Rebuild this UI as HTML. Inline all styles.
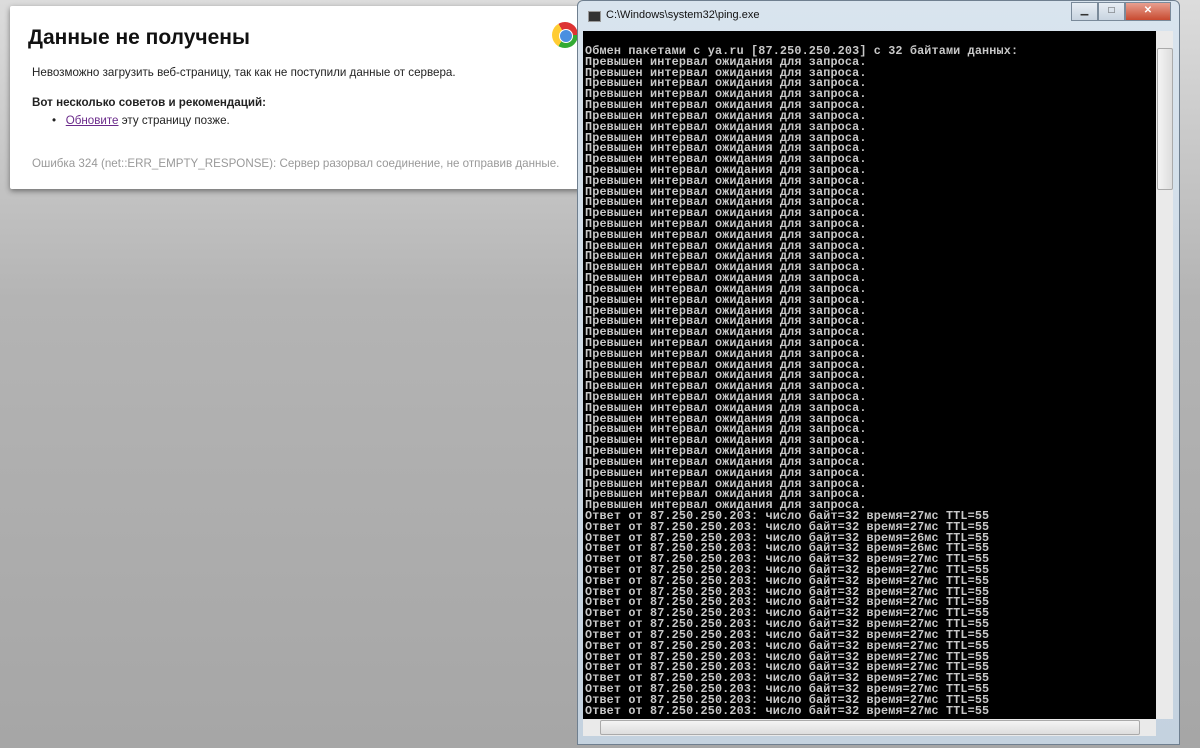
<!DOCTYPE html>
<html><head><meta charset="utf-8"><style>
body{margin:0;width:1200px;height:748px;overflow:hidden;background:linear-gradient(#dcdcdc,#b4b4b4 40%,#a6a6a6);font-family:"Liberation Sans",sans-serif;position:relative}
.card{position:absolute;left:10px;top:6px;width:580px;height:183px;background:#fff;box-shadow:0 2px 6px rgba(0,0,0,.45);border-radius:2px}
.card h1{position:absolute;left:18px;top:20px;margin:0;font-size:21px;font-weight:bold;color:#111}
.p{position:absolute;left:22px;font-size:11.6px;color:#222}
.chrome{position:absolute;left:542px;top:16px;width:26px;height:26px;border-radius:50%;background:conic-gradient(from -30deg,#d33 0 120deg,#3a3 120deg 240deg,#fc3 240deg 360deg)}
.chrome:after{content:"";position:absolute;left:7px;top:7px;width:12px;height:12px;border-radius:50%;background:#4a8fe0;border:1px solid #fff}
.win{position:absolute;left:577px;top:0;width:603px;height:745px;background:linear-gradient(#d9e4ee,#c4d2df);border:1px solid #6f7f8f;border-radius:6px 6px 0 0;box-sizing:border-box}
.title{position:absolute;left:28px;top:8px;font-size:11px;color:#111}
.ticon{position:absolute;left:10px;top:10px;width:11px;height:9px;background:#333;border:1px solid #999}
.btns{position:absolute;right:8px;top:1px;height:18px;display:flex}
.btns div{width:25px;height:17px;border:1px solid #7a8a9a;background:linear-gradient(#e8eef4,#c8d4e0);font-size:10px;text-align:center;line-height:16px;color:#333}
.btns .x{width:44px;background:linear-gradient(#e8a090,#c84a30);color:#fff;font-weight:bold}
.con{position:absolute;left:5px;top:30px;width:573px;height:688px;background:#000;overflow:hidden}
.con pre{margin:0;padding:15px 0 0 2px;font-family:"Liberation Mono","DejaVu Sans Mono",monospace;font-weight:bold;font-size:11.8px;line-height:10.82px;color:#c8c8c8;letter-spacing:0.14px}
.vs{position:absolute;left:578px;top:30px;width:17px;height:688px;background:#eaeaea}
.vs .th{position:absolute;left:1px;top:17px;width:14px;height:140px;background:linear-gradient(90deg,#f4f4f4,#ddd);border:1px solid #aaa;border-radius:2px}
.hs{position:absolute;left:5px;top:718px;width:573px;height:17px;background:#eaeaea}
.hs .th{position:absolute;left:17px;top:1px;width:538px;height:13px;background:linear-gradient(#f4f4f4,#ddd);border:1px solid #aaa;border-radius:2px}
</style></head><body>
<div class="card">
<h1>Данные не получены</h1>
<div class="chrome"></div>
<div class="p" style="top:60px">Невозможно загрузить веб-страницу, так как не поступили данные от сервера.</div>
<div class="p" style="top:90px;font-weight:bold">Вот несколько советов и рекомендаций:</div>
<div class="p" style="top:108px;left:42px">•&nbsp;&nbsp;&nbsp;<span style="color:#6a2a8a;text-decoration:underline">Обновите</span> эту страницу позже.</div>
<div class="p" style="top:151px;color:#999">Ошибка 324 (net::ERR_EMPTY_RESPONSE): Сервер разорвал соединение, не отправив данные.</div>
</div>
<div class="win">
<div class="ticon"></div><div class="title">C:\Windows\system32\ping.exe</div>
<div class="btns"><div>▁</div><div>□</div><div class="x">✕</div></div>
<div class="con"><pre>Обмен пакетами с ya.ru [87.250.250.203] с 32 байтами данных:
Превышен интервал ожидания для запроса.
Превышен интервал ожидания для запроса.
Превышен интервал ожидания для запроса.
Превышен интервал ожидания для запроса.
Превышен интервал ожидания для запроса.
Превышен интервал ожидания для запроса.
Превышен интервал ожидания для запроса.
Превышен интервал ожидания для запроса.
Превышен интервал ожидания для запроса.
Превышен интервал ожидания для запроса.
Превышен интервал ожидания для запроса.
Превышен интервал ожидания для запроса.
Превышен интервал ожидания для запроса.
Превышен интервал ожидания для запроса.
Превышен интервал ожидания для запроса.
Превышен интервал ожидания для запроса.
Превышен интервал ожидания для запроса.
Превышен интервал ожидания для запроса.
Превышен интервал ожидания для запроса.
Превышен интервал ожидания для запроса.
Превышен интервал ожидания для запроса.
Превышен интервал ожидания для запроса.
Превышен интервал ожидания для запроса.
Превышен интервал ожидания для запроса.
Превышен интервал ожидания для запроса.
Превышен интервал ожидания для запроса.
Превышен интервал ожидания для запроса.
Превышен интервал ожидания для запроса.
Превышен интервал ожидания для запроса.
Превышен интервал ожидания для запроса.
Превышен интервал ожидания для запроса.
Превышен интервал ожидания для запроса.
Превышен интервал ожидания для запроса.
Превышен интервал ожидания для запроса.
Превышен интервал ожидания для запроса.
Превышен интервал ожидания для запроса.
Превышен интервал ожидания для запроса.
Превышен интервал ожидания для запроса.
Превышен интервал ожидания для запроса.
Превышен интервал ожидания для запроса.
Превышен интервал ожидания для запроса.
Превышен интервал ожидания для запроса.
Ответ от 87.250.250.203: число байт=32 время=27мс TTL=55
Ответ от 87.250.250.203: число байт=32 время=27мс TTL=55
Ответ от 87.250.250.203: число байт=32 время=26мс TTL=55
Ответ от 87.250.250.203: число байт=32 время=26мс TTL=55
Ответ от 87.250.250.203: число байт=32 время=27мс TTL=55
Ответ от 87.250.250.203: число байт=32 время=27мс TTL=55
Ответ от 87.250.250.203: число байт=32 время=27мс TTL=55
Ответ от 87.250.250.203: число байт=32 время=27мс TTL=55
Ответ от 87.250.250.203: число байт=32 время=27мс TTL=55
Ответ от 87.250.250.203: число байт=32 время=27мс TTL=55
Ответ от 87.250.250.203: число байт=32 время=27мс TTL=55
Ответ от 87.250.250.203: число байт=32 время=27мс TTL=55
Ответ от 87.250.250.203: число байт=32 время=27мс TTL=55
Ответ от 87.250.250.203: число байт=32 время=27мс TTL=55
Ответ от 87.250.250.203: число байт=32 время=27мс TTL=55
Ответ от 87.250.250.203: число байт=32 время=27мс TTL=55
Ответ от 87.250.250.203: число байт=32 время=27мс TTL=55
Ответ от 87.250.250.203: число байт=32 время=27мс TTL=55
Ответ от 87.250.250.203: число байт=32 время=27мс TTL=55
</pre></div>
<div class="vs"><div class="th"></div></div>
<div class="hs"><div class="th"></div></div>
</div>
</body></html>
